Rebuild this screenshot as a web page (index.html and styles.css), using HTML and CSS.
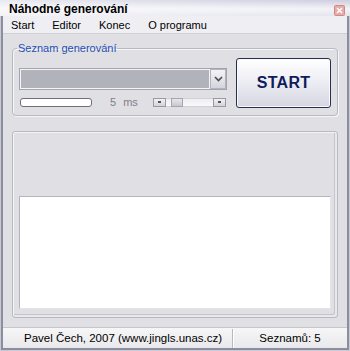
FILE: index.html
```html
<!DOCTYPE html>
<html lang="cs">
<head>
  <meta charset="UTF-8" />
  <title>Náhodné generování</title>
  <link rel="stylesheet" href="styles.css">
</head>
<body>
  <div class="window">
    <div class="titlebar">
      <span class="title">Náhodné generování</span>
      <span class="close-btn">
        <svg width="11" height="11" viewBox="0 0 11 11">
          <rect x="0.5" y="0.5" width="10" height="10" rx="1" fill="#eaa9a6" stroke="#c98a88"/>
          <path d="M3 3 L8 8 M8 3 L3 8" stroke="#fff" stroke-width="1.6"/>
        </svg>
      </span>
    </div>
    <div class="client">
      <nav class="menubar">
        <span class="menu-item">Start</span>
        <span class="menu-item">Editor</span>
        <span class="menu-item">Konec</span>
        <span class="menu-item">O programu</span>
      </nav>

      <main class="content">
        <fieldset class="group">
          <legend>Seznam generování</legend>
          <div class="group-body">
            <div class="controls">
              <div class="select-box">
                <div class="select-value"></div>
                <div class="select-arrow">
                  <svg width="9" height="6" viewBox="0 0 9 6">
                    <path d="M1 1 L4.5 4.5 L8 1" fill="none" stroke="#4a4a5a" stroke-width="1.6"/>
                  </svg>
                </div>
              </div>
              <div class="speed-row">
                <div class="progress"></div>
                <span class="speed-label">5 <span class="unit">ms</span></span>
                <div class="trackbar">
                  <span class="tb-btn"><i></i></span>
                  <span class="tb-track"><span class="tb-thumb"></span></span>
                  <span class="tb-btn"><i></i></span>
                </div>
              </div>
            </div>
            <button class="start-btn">START</button>
          </div>
        </fieldset>

        <section class="output-panel">
          <div class="output-box"></div>
        </section>
      </main>

      <footer class="statusbar">
        <div class="status-left">Pavel Čech, 2007 (www.jingls.unas.cz)</div>
        <div class="status-right">Seznamů: 5</div>
      </footer>
    </div>
  </div>
</body>
</html>
```

FILE: styles.css
```css
html, body {
  margin: 0;
  padding: 0;
  background: #e0dfe3;
  font-family: "Liberation Sans", Arial, sans-serif;
  color: #000;
}

.window {
  width: 350px;
  height: 351px;
  box-sizing: border-box;
  display: flex;
  flex-direction: column;
  border: 1px solid #c9c9d6;
  border-top: none;
}

.titlebar {
  height: 16px;
  margin: 0 -1px;
  display: flex;
  justify-content: space-between;
  align-items: center;
  padding: 0 5px 0 9px;
  background:
    linear-gradient(to right, rgba(255, 255, 255, 0.55), rgba(255, 255, 255, 0)),
    linear-gradient(#cdcde0, #f3f3f7 55%, #e4e4ee);
}

.title {
  font-weight: bold;
  font-size: 12px;
  padding-top: 1px;
}

.close-btn {
  display: flex;
  margin-top: 4px;
}

.client {
  flex: 1;
  display: flex;
  flex-direction: column;
  border: 2px solid #8d8da0;
  border-top: none;
  min-height: 0;
}

.menubar {
  height: 17px;
  display: flex;
  align-items: center;
  padding-left: 0;
  background: #efeff3;
  border-bottom: 1px solid #d0d0d8;
  font-size: 11px;
}

.menu-item {
  padding: 0 9px;
}

.menu-item:first-child {
  padding-left: 8px;
}

.content {
  flex: 1;
  display: flex;
  flex-direction: column;
  padding: 7px 9px 9px 9px;
  min-height: 0;
}

.group {
  margin: 0;
  padding: 3px 6px 7px 6px;
  border: 1px solid #b9b9c3;
  border-radius: 4px;
  box-shadow: 1px 1px 0 #f6f6f8, inset 1px 1px 0 #f6f6f8;
}

.group legend {
  font-size: 11px;
  line-height: 14px;
  color: #1f4fb4;
  padding: 0 1px;
  margin-left: -2px;
}

.group-body {
  display: flex;
  gap: 8px;
}

.controls {
  flex: 1;
  display: flex;
  flex-direction: column;
}

.select-box {
  margin-top: 10px;
  height: 22px;
  box-sizing: border-box;
  display: flex;
  border: 1px solid #a4a4b0;
  margin-right: 1px;
}

.select-value {
  flex: 1;
  background: #b2b2bb;
  border: 1px solid #f4f4f6;
}

.select-arrow {
  width: 14px;
  display: flex;
  align-items: center;
  justify-content: center;
  background: linear-gradient(#f4f4f7, #d4d4dd);
  border: 1px solid #b4b4be;
}

.speed-row {
  margin-top: 7px;
  height: 10px;
  display: flex;
  align-items: center;
}

.progress {
  width: 72px;
  height: 9px;
  box-sizing: border-box;
  margin-left: 1px;
  border: 1px solid #6e6e76;
  border-radius: 3px;
  background: #fff;
}

.speed-label {
  margin-left: 18px;
  font-size: 11px;
  color: #808088;
}

.speed-label .unit {
  margin-left: 4px;
}

.trackbar {
  margin-left: auto;
  margin-right: 2px;
  width: 73px;
  height: 9px;
  display: flex;
}

.tb-btn {
  width: 13px;
  box-sizing: border-box;
  border: 1px solid #9a9aa4;
  background: linear-gradient(#f2f2f5, #d2d2da);
  display: flex;
  align-items: center;
  justify-content: center;
}

.tb-btn i {
  width: 3px;
  height: 2px;
  background: #555;
}

.tb-track {
  flex: 1;
  display: flex;
  background: linear-gradient(#eeeef2, #fafafc);
  border-top: 1px solid #d0d0d6;
  border-bottom: 1px solid #d0d0d6;
  box-sizing: border-box;
}

.tb-thumb {
  margin-left: 5px;
  margin-top: -1px;
  width: 12px;
  height: 9px;
  box-sizing: border-box;
  border: 1px solid #a6a6b0;
  background: linear-gradient(#e6e6ec, #c8c8d2);
}

.start-btn {
  width: 95px;
  height: 50px;
  padding: 0;
  border: 1px solid #26304e;
  border-radius: 3px;
  background: linear-gradient(#ffffff, #f0f0f6 40%, #d6d6e2);
  box-shadow: inset 0 0 0 1px #fafafc;
  font-family: "Liberation Sans", Arial, sans-serif;
  font-weight: bold;
  font-size: 16px;
  color: #101c5c;
  letter-spacing: 0.3px;
}

.output-panel {
  flex: 1;
  margin-top: 15px;
  display: flex;
  flex-direction: column;
  justify-content: flex-end;
  padding: 0 6px 8px 6px;
  border: 1px solid #b9b9c3;
  border-radius: 3px;
  box-shadow: inset 1px 1px 0 #f4f4f6, inset -2px -2px 0 #e8e8ec, inset -3px -3px 0 #c4c4cc;
}

.output-box {
  height: 113px;
  box-sizing: border-box;
  background: #fff;
  border: 1px solid #b4b4bc;
  border-right-color: #e4e4e8;
  border-bottom-color: #e4e4e8;
}

.statusbar {
  height: 21px;
  box-sizing: border-box;
  display: flex;
  border-top: 1px solid #c6c6cc;
  background: linear-gradient(#f6f6f7, #e9e9ec);
  font-size: 11.5px;
  line-height: 18px;
  padding-top: 1px;
}

.status-left {
  width: 230px;
  box-sizing: border-box;
  padding-left: 21px;
  border-right: 1px solid #b8b8c0;
  box-shadow: 1px 0 0 #fff;
}

.status-right {
  flex: 1;
  text-align: center;
}
```
